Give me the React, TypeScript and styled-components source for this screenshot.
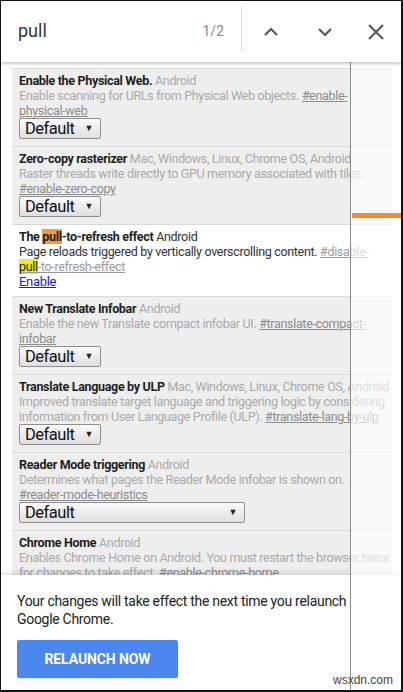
import React from "react";
import styled, { createGlobalStyle } from "styled-components";

const GlobalStyle = createGlobalStyle`
  html, body {
    margin: 0;
    padding: 0;
    background: #fff;
  }
  body {
    font-family: Roboto, "Noto Sans", "Liberation Sans", sans-serif;
  }
`;

type Flag = {
  name: React.ReactNode;
  platforms: string;
  desc: React.ReactNode;
  active?: boolean;
  control: "select" | "wide" | "enable" | "none";
};

const Frame = styled.div`
  width: 403px;
  height: 692px;
  box-sizing: border-box;
  border-style: solid;
  border-color: #111;
  border-width: 1px 2px 2px 1px;
  display: flex;
  flex-direction: column;
  overflow: hidden;
  position: relative;
  background: #fff;
`;

const FindBar = styled.div`
  height: 61px;
  flex-shrink: 0;
  display: flex;
  align-items: center;
  background: #fff;
  position: relative;
  z-index: 3;
  box-shadow: 0 2px 3px rgba(0, 0, 0, 0.22);
`;

const Query = styled.div`
  flex: 1;
  padding-left: 17px;
  font-size: 18px;
  color: #333;
  padding-bottom: 2px;
`;

const Count = styled.div`
  font-size: 14px;
  color: #8a8a8a;
  margin-right: 17px;
  padding-bottom: 2px;
`;

const Divider = styled.div`
  width: 1px;
  height: 45px;
  background: #dcdcdc;
  margin-bottom: 6px;
`;

const IconButton = styled.div<{ $w: number }>`
  width: ${(p) => p.$w}px;
  height: 40px;
  display: flex;
  align-items: center;
  justify-content: center;
  color: #555;
`;

const Body = styled.div`
  flex: 1;
  position: relative;
  display: flex;
  flex-direction: column;
  overflow: hidden;
`;

const FlagList = styled.div`
  flex: 1;
  overflow: hidden;
  padding: 6px 9px 0 11px;
  background: #fff;
`;

const FlagCard = styled.div<{ $active?: boolean }>`
  background: ${(p) => (p.$active ? "#fff" : "#eeeeee")};
  border-top: 1px solid #d9d9d9;
  padding: 4px 0 7px 7px;
  font-size: 12.5px;
  letter-spacing: -0.32px;
  line-height: 15px;
  color: ${(p) => (p.$active ? "#333" : "#a9a9a9")};
`;

const Title = styled.div`
  white-space: nowrap;
`;

const Name = styled.span`
  font-weight: 700;
  color: #1e1e1e;
`;

const Desc = styled.div``;

const FlagLink = styled.span<{ $active?: boolean; $nowrap?: boolean }>`
  text-decoration: underline;
  color: ${(p) => (p.$active ? "#9a9a9a" : "#8c8c8c")};
  white-space: ${(p) => (p.$nowrap ? "nowrap" : "normal")};
`;

const NoBreak = styled.span`
  white-space: nowrap;
`;

const Mark = styled.span<{ $tone: "orange" | "yellow" }>`
  background: ${(p) => (p.$tone === "orange" ? "#f2994a" : "#eaea1c")};
  color: #222;
`;

const Select = styled.div<{ $wide?: boolean }>`
  width: ${(p) => (p.$wide ? 212 : 68)}px;
  height: 19px;
  border: 1px solid #8e8e8e;
  border-radius: 2px;
  background: linear-gradient(#fbfbfb, #dedede);
  display: flex;
  align-items: center;
  justify-content: space-between;
  padding: 0 7px 0 5px;
  box-sizing: content-box;
  font-size: 16.5px;
  letter-spacing: -0.5px;
  color: #111;
`;

const Arrow = styled.span`
  font-size: 9px;
  color: #222;
`;

const EnableLink = styled.span`
  color: #1a1adb;
  text-decoration: underline;
  font-size: 13px;
`;

const BottomPanel = styled.div`
  height: 115px;
  flex-shrink: 0;
  background: #fff;
  position: relative;
  z-index: 1;
  box-shadow: 0 -3px 5px rgba(0, 0, 0, 0.12);
  padding: 17px 16px 0 16px;
  box-sizing: border-box;
`;

const Notice = styled.div`
  font-size: 14px;
  letter-spacing: -0.3px;
  line-height: 18px;
  color: #222;
  width: 340px;
`;

const RelaunchButton = styled.div`
  margin-top: 12px;
  width: 161px;
  height: 38px;
  background: #4a87ee;
  border-radius: 2px;
  color: #fff;
  font-weight: 700;
  font-size: 14px;
  letter-spacing: -0.1px;
  display: flex;
  align-items: center;
  justify-content: center;
  box-shadow: 0 1px 1px rgba(0, 0, 0, 0.12);
`;

const ScreenOverlay = styled.div`
  position: absolute;
  top: 0;
  bottom: 0;
  left: 349px;
  right: 0;
  background: rgba(255, 255, 255, 0.62);
  border-left: 1px solid #8c8c8c;
  z-index: 2;
`;

const RefreshBar = styled.div`
  position: absolute;
  top: 151px;
  left: 1px;
  right: 0;
  height: 5px;
  background: #f08a2c;
`;

const Watermark = styled.div`
  position: absolute;
  right: 8px;
  bottom: 3px;
  font-size: 12px;
  color: #444;
  font-family: "Liberation Sans", sans-serif;
  z-index: 4;
`;

const ChevronUp = () => (
  <svg width="16" height="10" viewBox="0 0 16 10">
    <path d="M2 8 L8 2 L14 8" fill="none" stroke="currentColor" strokeWidth="2" />
  </svg>
);

const ChevronDown = () => (
  <svg width="16" height="10" viewBox="0 0 16 10">
    <path d="M2 2 L8 8 L14 2" fill="none" stroke="currentColor" strokeWidth="2" />
  </svg>
);

const CloseIcon = () => (
  <svg width="18" height="18" viewBox="0 0 18 18">
    <path d="M2 2 L16 16 M16 2 L2 16" fill="none" stroke="currentColor" strokeWidth="2" />
  </svg>
);

const flags: Flag[] = [
  {
    name: "Enable the Physical Web.",
    platforms: "Android",
    desc: (
      <>
        Enable scanning for URLs from Physical Web objects. <FlagLink>#enable-physical-web</FlagLink>
      </>
    ),
    control: "select",
  },
  {
    name: "Zero-copy rasterizer",
    platforms: "Mac, Windows, Linux, Chrome OS, Android",
    desc: (
      <>
        Raster threads write directly to GPU memory associated with tiles. <FlagLink>#enable-zero-copy</FlagLink>
      </>
    ),
    control: "select",
  },
  {
    name: (
      <>
        The <Mark $tone="orange">pull</Mark>-to-refresh effect
      </>
    ),
    platforms: "Android",
    active: true,
    desc: (
      <>
        Page reloads triggered by vertically overscrolling content.{" "}
        <FlagLink $active>
          #disable-
          <NoBreak>
            <Mark $tone="yellow">pull</Mark>-to-refresh-effect
          </NoBreak>
        </FlagLink>
      </>
    ),
    control: "enable",
  },
  {
    name: "New Translate Infobar",
    platforms: "Android",
    desc: (
      <>
        Enable the new Translate compact infobar UI. <FlagLink>#translate-compact-infobar</FlagLink>
      </>
    ),
    control: "select",
  },
  {
    name: "Translate Language by ULP",
    platforms: "Mac, Windows, Linux, Chrome OS, Android",
    desc: (
      <>
        Improved translate target language and triggering logic by considering information from User
        Language Profile (ULP). <FlagLink>#translate-lang-by-ulp</FlagLink>
      </>
    ),
    control: "select",
  },
  {
    name: "Reader Mode triggering",
    platforms: "Android",
    desc: (
      <>
        Determines what pages the Reader Mode infobar is shown on.{" "}
        <FlagLink $nowrap>#reader-mode-heuristics</FlagLink>
      </>
    ),
    control: "wide",
  },
  {
    name: "Chrome Home",
    platforms: "Android",
    desc: (
      <>
        Enables Chrome Home on Android. You must restart the browser twice for changes to take effect.{" "}
        <FlagLink>#enable-chrome-home</FlagLink>
      </>
    ),
    control: "none",
  },
];

const FlagRow = ({ flag }: { flag: Flag }) => (
  <FlagCard $active={flag.active}>
    <Title>
      <Name>{flag.name}</Name> {flag.platforms}
    </Title>
    <Desc>{flag.desc}</Desc>
    {flag.control === "enable" && <EnableLink>Enable</EnableLink>}
    {(flag.control === "select" || flag.control === "wide") && (
      <Select $wide={flag.control === "wide"}>
        Default <Arrow>▼</Arrow>
      </Select>
    )}
  </FlagCard>
);

const App = () => {
  return (
    <Frame>
      <GlobalStyle />
      <FindBar>
        <Query>pull</Query>
        <Count>1/2</Count>
        <Divider />
        <IconButton $w={57}>
          <ChevronUp />
        </IconButton>
        <IconButton $w={52}>
          <ChevronDown />
        </IconButton>
        <IconButton $w={50}>
          <CloseIcon />
        </IconButton>
      </FindBar>
      <Body>
        <FlagList>
          {flags.map((flag, i) => (
            <FlagRow key={i} flag={flag} />
          ))}
        </FlagList>
        <BottomPanel>
          <Notice>Your changes will take effect the next time you relaunch Google Chrome.</Notice>
          <RelaunchButton>RELAUNCH NOW</RelaunchButton>
        </BottomPanel>
        <ScreenOverlay>
          <RefreshBar />
        </ScreenOverlay>
      </Body>
      <Watermark>wsxdn.com</Watermark>
    </Frame>
  );
};

export default App;
